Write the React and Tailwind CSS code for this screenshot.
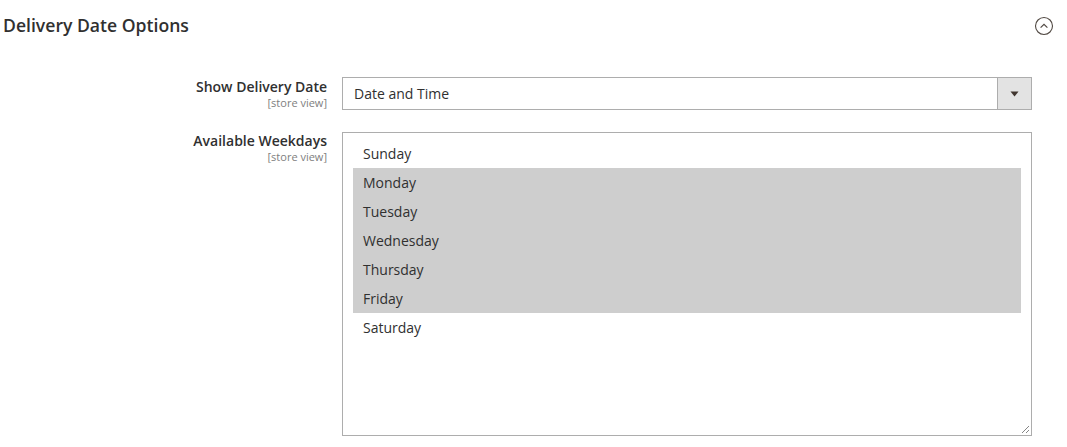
import React, { useState } from "react";

const days = ["Sunday", "Monday", "Tuesday", "Wednesday", "Thursday", "Friday", "Saturday"];

const FieldLabel = ({ title }) => (
  <div className="w-[327px] shrink-0 text-right">
    <div className="text-[14px] font-semibold leading-[18px] text-[#303030]">{title}</div>
    <div className="text-[11px] leading-[13px] text-[#808080]">[store view]</div>
  </div>
);

export default function App() {
  const [selected] = useState(["Monday", "Tuesday", "Wednesday", "Thursday", "Friday"]);

  return (
    <div className="w-[1067px] h-[447px] bg-white font-['Open_Sans',sans-serif] text-[#303030] overflow-hidden">
      {/* Section header */}
      <div className="flex items-center justify-between pl-[3px] pr-[13px] pt-[13px]">
        <h2 className="text-[17.6px] font-semibold leading-[24px] text-[#303030]">Delivery Date Options</h2>
        <svg width="20" height="20" viewBox="0 0 20 20" className="mt-[2px]">
          <circle cx="10" cy="10" r="8.5" fill="none" stroke="#514943" strokeWidth="1.1" />
          <path d="M6.6 11.6 L10 8.3 L13.4 11.6" fill="none" stroke="#514943" strokeWidth="1.2" />
        </svg>
      </div>

      <div className="mt-[40px] flex flex-col gap-[22px]">
        {/* Show Delivery Date */}
        <div className="flex gap-[15px]">
          <div className="pt-[1px]">
            <FieldLabel title="Show Delivery Date" />
          </div>
          <div className="flex w-[690px] h-[33px] border border-[#adadad] bg-white">
            <div className="flex-1 pl-[11px] text-[14px] leading-[31px] text-[#303030]">Date and Time</div>
            <div className="w-[34px] flex items-center justify-center bg-[#e3e3e3] border-l border-[#adadad]">
              <svg width="9" height="6" viewBox="0 0 9 6">
                <path d="M0.5 0.5 L8.5 0.5 L4.5 5.5 Z" fill="#41362f" />
              </svg>
            </div>
          </div>
        </div>

        {/* Available Weekdays */}
        <div className="flex gap-[15px]">
          <FieldLabel title="Available Weekdays" />
          <div className="relative w-[690px] h-[304px] border border-[#adadad] bg-white px-[10px] pt-[6px]">
            {days.map((d) => (
              <div
                key={d}
                className={`h-[29px] pl-[10px] text-[14px] leading-[29px] text-[#303030] ${
                  selected.includes(d) ? "bg-[#cecece]" : ""
                }`}
              >
                {d}
              </div>
            ))}
            <svg width="10" height="10" viewBox="0 0 10 10" className="absolute right-[1px] bottom-[1px]">
              <path d="M9 2 L2 9 M9 6 L6 9" stroke="#777" strokeWidth="0.9" />
            </svg>
          </div>
        </div>
      </div>
    </div>
  );
}
